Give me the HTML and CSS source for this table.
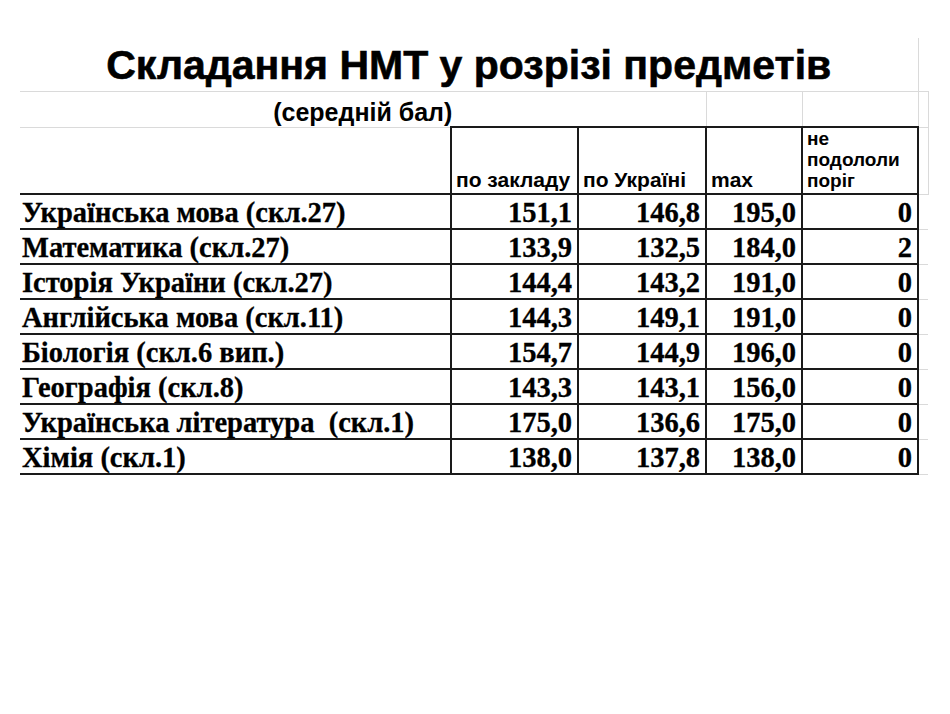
FILE: index.html
```html
<!DOCTYPE html>
<html lang="uk">
<head>
<meta charset="utf-8">
<title>Складання НМТ у розрізі предметів</title>
<link rel="stylesheet" href="styles.css">
</head>
<body>
<table class="sheet">
  <colgroup>
    <col class="c-subj"><col class="c-num"><col class="c-num2"><col class="c-max"><col class="c-fail"><col class="c-extra">
  </colgroup>
  <tr class="r-title">
    <td class="title" colspan="5">Складання НМТ у розрізі предметів</td>
    <td class="grid"></td>
  </tr>
  <tr class="r-sub">
    <td class="subtitle" colspan="3">(середній бал)</td>
    <td class="grid"></td>
    <td class="grid"></td>
    <td class="grid"></td>
  </tr>
  <tr class="r-head">
    <td class="head-empty"></td>
    <td class="head"><div class="hbox">по закладу</div></td>
    <td class="head"><div class="hbox">по Україні</div></td>
    <td class="head"><div class="hbox">max</div></td>
    <td class="head small"><div class="hbox">не подололи поріг</div></td>
    <td class="grid"></td>
  </tr>
  <tr class="row"><td class="subj">Українська мова (скл.27)</td><td class="num">151,1</td><td class="num">146,8</td><td class="num">195,0</td><td class="num">0</td><td class="grid"></td></tr>
  <tr class="row"><td class="subj">Математика (скл.27)</td><td class="num">133,9</td><td class="num">132,5</td><td class="num">184,0</td><td class="num">2</td><td class="grid"></td></tr>
  <tr class="row"><td class="subj">Історія України (скл.27)</td><td class="num">144,4</td><td class="num">143,2</td><td class="num">191,0</td><td class="num">0</td><td class="grid"></td></tr>
  <tr class="row"><td class="subj">Англійська мова (скл.11)</td><td class="num">144,3</td><td class="num">149,1</td><td class="num">191,0</td><td class="num">0</td><td class="grid"></td></tr>
  <tr class="row"><td class="subj">Біологія (скл.6 вип.)</td><td class="num">154,7</td><td class="num">144,9</td><td class="num">196,0</td><td class="num">0</td><td class="grid"></td></tr>
  <tr class="row"><td class="subj">Географія (скл.8)</td><td class="num">143,3</td><td class="num">143,1</td><td class="num">156,0</td><td class="num">0</td><td class="grid"></td></tr>
  <tr class="row"><td class="subj">Українська література&nbsp; (скл.1)</td><td class="num">175,0</td><td class="num">136,6</td><td class="num">175,0</td><td class="num">0</td><td class="grid"></td></tr>
  <tr class="row"><td class="subj">Хімія (скл.1)</td><td class="num">138,0</td><td class="num">137,8</td><td class="num">138,0</td><td class="num">0</td><td class="grid"></td></tr>
</table>
</body>
</html>
```

FILE: styles.css
```css
html, body {
  margin: 0;
  padding: 0;
  background: #ffffff;
}

body {
  padding: 38px 0 0 20px;
  color: #000;
}

.sheet {
  border-collapse: collapse;
  table-layout: fixed;
  width: 908px;
}

.c-subj { width: 431px; }
.c-num { width: 127px; }
.c-num2 { width: 128px; }
.c-max { width: 96px; }
.c-fail { width: 116px; }
.c-extra { width: 10px; }

td {
  padding: 0;
}

.r-title td { height: 47px; }
.r-sub td { height: 28px; }
.r-head td { height: 65px; }
.row td { height: 33px; }

.title {
  font-family: "Liberation Sans", Arial, sans-serif;
  font-weight: bold;
  font-size: 41px;
  text-align: center;
  vertical-align: bottom;
  line-height: 40px;
  padding-bottom: 6px;
  -webkit-text-stroke: 0.6px #000;
  border-right: 1px solid #dadada;
  border-bottom: 1px solid #dadada;
}

.grid {
  border-bottom: 1px solid #dadada;
  border-right: 1px solid #dadada;
}

.r-title .grid { border-right: none; }

.r-sub td.subtitle {
  font-family: "Liberation Sans", Arial, sans-serif;
  font-weight: bold;
  font-size: 25px;
  text-align: center;
  vertical-align: bottom;
  height: 34px;
  padding-bottom: 0;
  line-height: 28px;
  border-bottom: 1px solid #dadada;
  border-right: 1px solid #dadada;
}

.head-empty {
  border-bottom: 2px solid #1a1a1a;
}

.head {
  border: 2px solid #1a1a1a;
  vertical-align: bottom;
  font-family: "Liberation Sans", Arial, sans-serif;
  font-weight: bold;
  font-size: 21px;
}

.hbox {
  height: 65px;
  overflow: hidden;
  display: flex;
  flex-direction: column;
  justify-content: flex-end;
  padding: 0 1px 1px 4px;
  box-sizing: border-box;
  line-height: 24px;
  white-space: nowrap;
}

.head.small .hbox {
  font-size: 19px;
  white-space: normal;
  line-height: 21px;
  padding-bottom: 2px;
}

.row td {
  font-family: "Liberation Serif", "Times New Roman", serif;
  font-weight: bold;
  font-size: 28.5px;
  line-height: 30px;
  vertical-align: bottom;
  -webkit-text-stroke: 0.3px #000;
  border-bottom: 2px solid #1a1a1a;
}

.subj {
  text-align: left;
  padding-left: 2px;
  white-space: pre;
}

.num {
  text-align: right;
  padding-right: 5px;
  border-left: 2px solid #1a1a1a;
  border-right: 2px solid #1a1a1a;
}

.row td.grid {
  border-left: 2px solid #1a1a1a;
  border-bottom: 1px solid #dadada;
  border-right: none;
}
```
